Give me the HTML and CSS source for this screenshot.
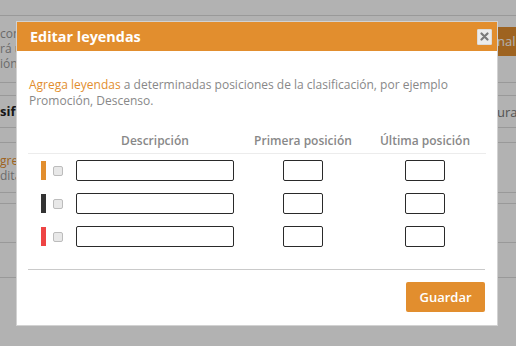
FILE: index.html
```html
<!DOCTYPE html>
<html lang="es">
  <head>
    <meta charset="UTF-8" />
    <meta name="viewport" content="width=device-width, initial-scale=1.0" />
    <title>Editar leyendas</title>
    <link rel="stylesheet" href="styles.css">
  </head>
  <body>
    <!-- Page behind the dialog -->
    <div class="page">
      <div class="bg-row row-top"></div>
      <div class="bg-row row-intro">
        <div class="bg-left">
          <span>comp</span>
          <span>rá u</span>
          <span>ión</span>
        </div>
        <div class="bg-right">
          <span class="bg-btn">nalizar</span>
        </div>
      </div>
      <div class="bg-row row-gap"></div>
      <div class="bg-row row-title">
        <div class="bg-left">
          <span class="bg-heading">sifi</span>
        </div>
        <div class="bg-right">
          <span class="bg-muted">ura</span>
        </div>
      </div>
      <div class="bg-row row-small"></div>
      <div class="bg-row row-legend">
        <div class="bg-left">
          <span class="bg-link">gre</span>
          <span>dita</span>
        </div>
      </div>
      <div class="bg-row row-thin"></div>
      <div class="bg-row row-mid"></div>
      <div class="bg-row row-last"></div>
    </div>

    <div class="overlay"></div>

    <div class="modal">
      <div class="modal-header">
        <h1>Editar leyendas</h1>
        <button class="close-btn" type="button" aria-label="Cerrar">
          <svg width="9" height="9" viewBox="0 0 9 9">
            <path d="M1.5 1.5 L7.5 7.5 M7.5 1.5 L1.5 7.5" stroke="#7a7a7a" stroke-width="2.2" stroke-linecap="round" />
          </svg>
        </button>
      </div>

      <div class="modal-body">
        <p class="intro">
          <span class="accent">Agrega leyendas</span> a determinadas posiciones de la clasificación, por ejemplo
          Promoción, Descenso.
        </p>

        <div class="legend-table">
          <div class="legend-head">
            <span></span>
            <span>Descripción</span>
            <span>Primera posición</span>
            <span>Última posición</span>
          </div>

          <div class="legend-row">
            <div class="legend-mark">
              <span class="color-bar bar-orange"></span>
              <input type="checkbox" class="check" />
            </div>
            <div class="cell"><input type="text" class="field field-wide" /></div>
            <div class="cell"><input type="text" class="field field-short" /></div>
            <div class="cell"><input type="text" class="field field-short" /></div>
          </div>

          <div class="legend-row">
            <div class="legend-mark">
              <span class="color-bar bar-dark"></span>
              <input type="checkbox" class="check" />
            </div>
            <div class="cell"><input type="text" class="field field-wide" /></div>
            <div class="cell"><input type="text" class="field field-short" /></div>
            <div class="cell"><input type="text" class="field field-short" /></div>
          </div>

          <div class="legend-row">
            <div class="legend-mark">
              <span class="color-bar bar-red"></span>
              <input type="checkbox" class="check" />
            </div>
            <div class="cell"><input type="text" class="field field-wide" /></div>
            <div class="cell"><input type="text" class="field field-short" /></div>
            <div class="cell"><input type="text" class="field field-short" /></div>
          </div>
        </div>
      </div>

      <div class="modal-footer">
        <button class="save-btn" type="button">Guardar</button>
      </div>
    </div>
  </body>
</html>
```

FILE: styles.css
```css
body {
  font-family: "Open Sans", "Liberation Sans", sans-serif;
  color: #888;
  background-color: #fff;
  margin: 0;
  padding: 0;
  overflow: hidden;
}

/* Background page */
.page {
  width: 516px;
}

.bg-row {
  display: flex;
  justify-content: space-between;
  box-sizing: border-box;
  border-bottom: 1px solid #dcdcdc;
}

.row-top { height: 16px; }
.row-intro { height: 67px; }
.row-gap { height: 13px; }
.row-title { height: 32px; align-items: center; }
.row-small { height: 15px; }
.row-legend { height: 50px; }
.row-thin { height: 11px; }
.row-mid { height: 39px; }
.row-last { height: 35px; }

.bg-left {
  width: 16px;
  overflow: hidden;
  display: flex;
  flex-direction: column;
  white-space: nowrap;
  font-size: 12px;
  line-height: 15px;
  color: #999;
}

.row-intro .bg-left,
.row-legend .bg-left {
  padding-top: 10px;
}

.bg-right {
  width: 19px;
  overflow: hidden;
  white-space: nowrap;
  font-size: 12px;
}

.bg-btn {
  display: block;
  margin-top: 11px;
  height: 29px;
  line-height: 29px;
  background-color: #e28e2e;
  color: #fff;
  font-size: 13px;
}

.bg-heading {
  font-size: 13px;
  font-weight: 700;
  color: #222;
}

.bg-muted {
  font-size: 13px;
  color: #777;
}

.bg-link {
  color: #e28e2e;
}

.overlay {
  position: fixed;
  inset: 0;
  background-color: rgba(0, 0, 0, 0.3);
}

/* Dialog */
.modal {
  position: absolute;
  left: 16px;
  top: 21px;
  width: 482px;
  box-sizing: border-box;
  background-color: #fff;
  border: 1px solid #d2d2d2;
}

.modal-header {
  display: flex;
  align-items: center;
  justify-content: space-between;
  height: 29px;
  padding: 0 5px 0 13px;
  background-color: #e28e2e;
}

.modal-header h1 {
  margin: 0;
  font-size: 14.4px;
  font-weight: 700;
  color: #fff;
}

.close-btn {
  display: flex;
  align-items: center;
  justify-content: center;
  width: 15px;
  height: 16px;
  padding: 0;
  background-color: #ececec;
  border: 1px solid #dcdcdc;
  border-radius: 1px;
}

.modal-body {
  padding: 26px 12px 0;
}

.intro {
  margin: 0;
  font-size: 12px;
  line-height: 16px;
  color: #888;
}

.accent {
  color: #e28e2e;
}

.legend-table {
  margin: 24px -1px 0;
}

.legend-head,
.legend-row {
  display: grid;
  grid-template-columns: 44px 166px 130px 114px;
  align-items: center;
}

.legend-head {
  padding-bottom: 4px;
  border-bottom: 1px solid #ececec;
  font-size: 12px;
  line-height: 16px;
  font-weight: 600;
  color: #888;
  text-align: center;
}

.legend-row {
  height: 33px;
}

.legend-mark {
  display: flex;
  align-items: center;
  padding-left: 13px;
}

.color-bar {
  width: 5px;
  height: 19px;
}

.bar-orange { background-color: #e28e2e; }
.bar-dark { background-color: #333; }
.bar-red { background-color: #ee4444; }

.check {
  appearance: none;
  width: 10px;
  height: 10px;
  margin: 0 0 0 7px;
  background-color: #e8e8e8;
  border: 1px solid #bcbcbc;
  border-radius: 2px;
}

.cell {
  display: flex;
  justify-content: center;
}

.field {
  height: 21px;
  box-sizing: border-box;
  margin: 0;
  border: 1px solid #2a2a2a;
  border-radius: 2px;
  background-color: #fff;
}

.field-wide { width: 158px; }
.field-short { width: 40px; }

.modal-footer {
  display: flex;
  justify-content: flex-end;
  margin: 16px 12px 0 11px;
  padding: 12px 0 13px;
  border-top: 1px solid #cacaca;
}

.save-btn {
  width: 79px;
  height: 30px;
  border: none;
  border-radius: 2px;
  background-color: #e28e2e;
  color: #fff;
  font-family: "Open Sans", "Liberation Sans", sans-serif;
  font-size: 13px;
  font-weight: 600;
}
```
